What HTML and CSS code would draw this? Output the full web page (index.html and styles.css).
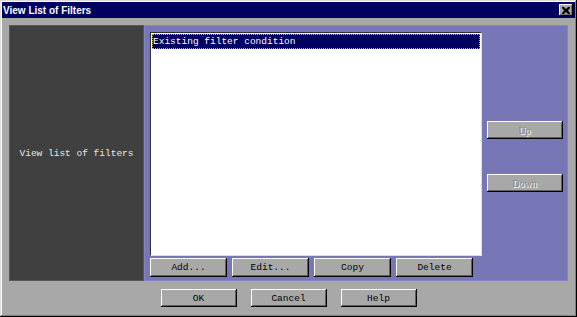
FILE: index.html
```html
<!DOCTYPE html>
<html lang="en">
<head>
  <meta charset="UTF-8" />
  <title>View List of Filters</title>
  <link rel="stylesheet" href="styles.css">
</head>
<body>
  <div class="window">
    <div class="titlebar">
      <span class="title">View List of Filters</span>
      <div class="close">
        <svg width="8" height="7" viewBox="0 0 8 7"><path d="M0 0h2l2 2 2-2h2v1l-2 2.5 2 2.5v1h-2l-2-2-2 2h-2v-1l2-2.5-2-2.5z" fill="#000"/></svg>
      </div>
    </div>

    <div class="main">
      <div class="side">View list of filters</div>
      <div class="panel">
        <div class="list-col">
          <div class="list">
            <div class="item selected">Existing filter condition</div>
          </div>
          <div class="row-buttons">
            <button class="btn">Add...</button>
            <button class="btn">Edit...</button>
            <button class="btn">Copy</button>
            <button class="btn">Delete</button>
          </div>
        </div>
        <div class="move-col">
          <button class="btn disabled up">Up</button>
          <button class="btn disabled down">Down</button>
        </div>
      </div>
    </div>

    <div class="footer">
      <button class="btn">OK</button>
      <button class="btn">Cancel</button>
      <button class="btn">Help</button>
    </div>
  </div>
</body>
</html>
```

FILE: styles.css
```css
body {
  margin: 0;
  padding: 0;
  background-color: #a8a8a8;
}
.window {
  width: 577px;
  height: 317px;
  box-sizing: border-box;
  padding: 2px;
  background-color: #a8a8a8;
  box-shadow: inset -1px -1px #000000, inset 1px 1px #dcdcdc, inset -2px -2px #808080, inset 2px 2px #ffffff;
}
.titlebar {
  height: 16px;
  background-color: #000060;
  color: white;
  display: flex;
  align-items: center;
  justify-content: space-between;
  padding: 0 2px 0 1px;
}
.title {
  font-family: "Liberation Sans", Arial, sans-serif;
  font-weight: bold;
  font-size: 10px;
}
.close {
  width: 14px;
  height: 12px;
  box-sizing: border-box;
  background-color: #a8a8a8;
  display: flex;
  align-items: center;
  justify-content: center;
  box-shadow: inset -1px -1px #000000, inset 1px 1px #ffffff, inset -2px -2px #707070;
}
.main {
  display: flex;
  height: 256px;
  margin: 7px 7px 0 7px;
}
.side {
  width: 135px;
  box-sizing: border-box;
  background-color: #404040;
  border: 1px solid #585858;
  color: #e8e8e8;
  font-family: "Liberation Mono", "Courier New", monospace;
  font-size: 9.5px;
  display: flex;
  align-items: center;
  justify-content: center;
}
.panel {
  flex: 1;
  box-sizing: border-box;
  background-color: #7777b7;
  border: 1px solid #8484c4;
  display: flex;
  padding: 6px 0 0 5px;
}
.list-col {
  width: 332px;
}
.list {
  height: 224px;
  box-sizing: border-box;
  background-color: white;
  border-style: solid;
  border-width: 1px;
  border-color: #303030 #e0e0e0 #e0e0e0 #303030;
  padding: 1px;
}
.item {
  height: 15px;
  box-sizing: border-box;
  padding-left: 0;
  font-family: "Liberation Mono", "Courier New", monospace;
  font-size: 9.5px;
  line-height: 13px;
}
.selected {
  background-color: #000060;
  color: white;
  border: 1px dotted #b8b870;
}
.row-buttons {
  display: flex;
  gap: 5px;
  margin-top: 2px;
}
.btn {
  width: 77px;
  height: 19px;
  padding: 0;
  margin: 0;
  background-color: #a8a8a8;
  border: none;
  box-shadow: inset -1px -1px #000000, inset 1px 1px #ffffff, inset -2px -2px #606060;
  font-family: "Liberation Mono", "Courier New", monospace;
  font-size: 9.5px;
  color: #000000;
}
.move-col {
  flex: 1;
  display: flex;
  flex-direction: column;
  align-items: center;
  padding-top: 89px;
}
.disabled {
  width: 76px;
  height: 18px;
  font-family: "Liberation Serif", "Times New Roman", serif;
  font-size: 10px;
  color: #808080;
  text-shadow: 1px 1px #ffffff;
}
.down {
  margin-top: 35px;
}
.footer {
  display: flex;
  justify-content: center;
  gap: 14px;
  margin-top: 8px;
}
.footer .btn {
  width: 76px;
  height: 18px;
}
```
